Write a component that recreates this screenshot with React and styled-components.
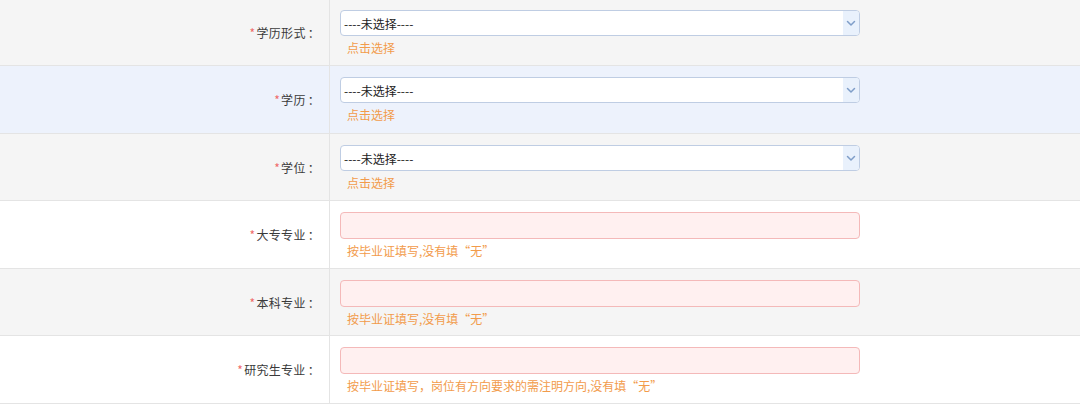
import React from "react";
import styled, { createGlobalStyle } from "styled-components";

const Global = createGlobalStyle`
  html, body { margin: 0; padding: 0; background: #fff; }
  body { font-family: "Noto Sans CJK SC", "Noto Sans", sans-serif; overflow: hidden; }
`;

const Table = styled.div`
  width: 1080px;
  margin-top: -1px;
  display: flex;
  flex-direction: column;
`;

const bgs = { gray: "#f5f5f5", blue: "#edf2fc", white: "#ffffff" };

const Row = styled.div`
  display: grid;
  grid-template-columns: 330px 1fr;
  height: 67px;
  box-sizing: border-box;
  border-bottom: 1px solid #e4e4e4;
  background: ${(p) => bgs[p.$bg]};
  &:nth-child(even) { height: 68px; }
`;

const Label = styled.div`
  display: flex;
  align-items: center;
  justify-content: flex-end;
  padding-right: 9px;
  border-right: 1px solid #e4e4e4;
  font-size: 12px;
  color: #3a3a3a;
  letter-spacing: 0.3px;
`;

const Star = styled.span`
  color: #ef6b6b;
  margin-right: 1px;
`;

const Colon = styled.span`
  margin-left: 2px;
`;

const Field = styled.div`
  display: flex;
  flex-direction: column;
  padding: 11px 0 0 10px;
`;

const SelectBox = styled.div`
  width: 520px;
  height: 26px;
  box-sizing: border-box;
  border: 1px solid #bfcde3;
  border-radius: 4px;
  background: #fff;
  display: flex;
  align-items: center;
  overflow: hidden;
`;

const SelectText = styled.span`
  flex: 1;
  padding-left: 3px;
  font-size: 12px;
  color: #222;
`;

const Arrow = styled.span`
  width: 16px;
  height: 100%;
  background: #e9f1fc;
  display: flex;
  align-items: center;
  justify-content: center;
`;

const TextInput = styled.div`
  width: 520px;
  height: 27px;
  box-sizing: border-box;
  border: 1px solid #f4b9b9;
  border-radius: 4px;
  background: #fff0f0;
`;

const Hint = styled.div`
  margin-top: 4px;
  padding-left: 7px;
  font-size: 12px;
  line-height: 16px;
  color: #f29b4b;
`;

const Chevron = () => (
  <svg width="10" height="7" viewBox="0 0 10 7">
    <path d="M1.5 1.5 L5 5 L8.5 1.5" fill="none" stroke="#7f9ec8" strokeWidth="1.5" strokeLinecap="round" strokeLinejoin="round" />
  </svg>
);

const rows = [
  { label: "学历形式", bg: "gray", type: "select", hint: "点击选择" },
  { label: "学历", bg: "blue", type: "select", hint: "点击选择" },
  { label: "学位", bg: "gray", type: "select", hint: "点击选择" },
  { label: "大专专业", bg: "white", type: "input", hint: "按毕业证填写,没有填“无”" },
  { label: "本科专业", bg: "gray", type: "input", hint: "按毕业证填写,没有填“无”" },
  { label: "研究生专业", bg: "white", type: "input", hint: "按毕业证填写，岗位有方向要求的需注明方向,没有填“无”" },
];

export default function App() {
  return (
    <>
      <Global />
      <Table>
        {rows.map((r) => (
          <Row key={r.label} $bg={r.bg}>
            <Label>
              <Star>*</Star>
              {r.label}
              <Colon>：</Colon>
            </Label>
            <Field>
              {r.type === "select" ? (
                <SelectBox>
                  <SelectText>----未选择----</SelectText>
                  <Arrow>
                    <Chevron />
                  </Arrow>
                </SelectBox>
              ) : (
                <TextInput />
              )}
              <Hint>{r.hint}</Hint>
            </Field>
          </Row>
        ))}
      </Table>
    </>
  );
}
